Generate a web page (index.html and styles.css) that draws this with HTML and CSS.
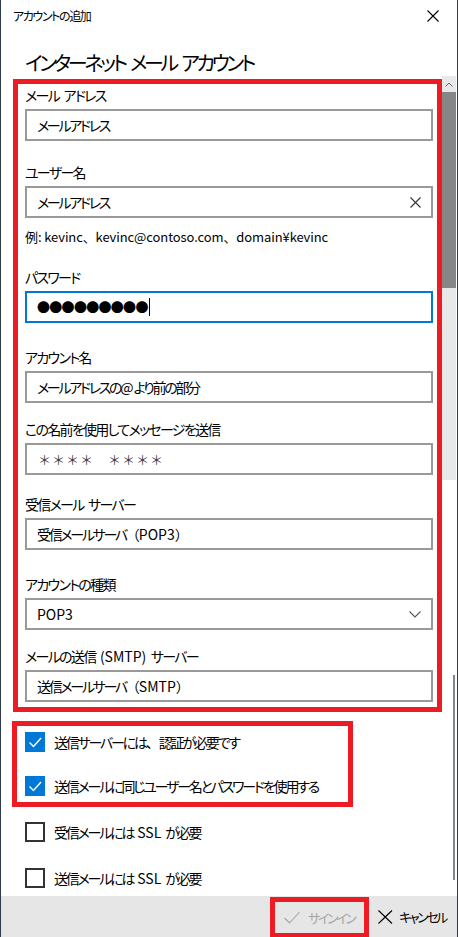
FILE: index.html
```html
<!DOCTYPE html>
<html lang="ja">
<head>
<meta charset="utf-8">
<title>アカウントの追加</title>
<link rel="stylesheet" href="styles.css">
</head>
<body>
<div class="window">
  <div class="titlebar">
    <span class="title">アカウントの追加</span>
    <span class="close">
      <svg width="12" height="12" viewBox="0 0 12 12"><path d="M0.5 0.5 L11.5 11.5 M11.5 0.5 L0.5 11.5" stroke="#000" stroke-width="1.1" fill="none"/></svg>
    </span>
  </div>
  <div class="content">
    <h1 class="heading">インターネット メール アカウント</h1>

    <div class="fields">
      <div class="field first">
        <div class="label">メール アドレス</div>
        <div class="input"><span>メールアドレス</span></div>
      </div>
      <div class="field">
        <div class="label">ユーザー名</div>
        <div class="input">
          <span>メールアドレス</span>
          <svg class="clear" width="11" height="11" viewBox="0 0 11 11"><path d="M0.5 0.5 L10.5 10.5 M10.5 0.5 L0.5 10.5" stroke="#333" stroke-width="1.1" fill="none"/></svg>
        </div>
        <div class="hint">例: kevinc、kevinc@contoso.com、domain¥kevinc</div>
      </div>
      <div class="field">
        <div class="label">パスワード</div>
        <div class="input focused"><span class="dots">●●●●●●●●●</span><span class="caret"></span></div>
      </div>
      <div class="field loose">
        <div class="label">アカウント名</div>
        <div class="input"><span>メールアドレスの<span class="lat">@</span>より前の部分</span></div>
      </div>
      <div class="field tight">
        <div class="label">この名前を使用してメッセージを送信</div>
        <div class="input"><span class="stars">＊＊＊＊　＊＊＊＊</span></div>
      </div>
      <div class="field mid">
        <div class="label">受信メール サーバー</div>
        <div class="input"><span>受信メールサーバ<span class="fw">（</span><span class="lat">POP3</span><span class="fw">）</span></span></div>
      </div>
      <div class="field loose">
        <div class="label">アカウントの種類</div>
        <div class="input select">
          <span class="lat">POP3</span>
          <svg class="chev" width="12" height="7" viewBox="0 0 12 7"><path d="M0.5 0.5 L6 6 L11.5 0.5" stroke="#555" stroke-width="1.1" fill="none"/></svg>
        </div>
      </div>
      <div class="field tight">
        <div class="label">メールの送信 <span class="lat">(SMTP)</span> サーバー</div>
        <div class="input"><span>送信メールサーバ<span class="fw">（</span><span class="lat">SMTP</span><span class="fw">）</span></span></div>
      </div>
    </div>

    <div class="checks-marked">
      <label class="check-row">
        <span class="box checked"><svg width="20" height="20" viewBox="0 0 20 20"><path d="M4.5 10.5 L8.5 14.5 L16 6" stroke="#fff" stroke-width="1.4" fill="none"/></svg></span>
        <span class="ctext">送信サーバーには<span class="fw">、</span>認証が必要です</span>
      </label>
      <label class="check-row">
        <span class="box checked"><svg width="20" height="20" viewBox="0 0 20 20"><path d="M4.5 10.5 L8.5 14.5 L16 6" stroke="#fff" stroke-width="1.4" fill="none"/></svg></span>
        <span class="ctext">送信メールに同じユーザー名とパスワードを使用する</span>
      </label>
    </div>

    <div class="checks">
      <label class="check-row">
        <span class="box"></span>
        <span class="ctext">受信メールには <span class="lat">SSL</span> が必要</span>
      </label>
      <label class="check-row">
        <span class="box"></span>
        <span class="ctext">送信メールには <span class="lat">SSL</span> が必要</span>
      </label>
    </div>

    <div class="scrollbar">
      <div class="sb-arrow"><svg width="8" height="5" viewBox="0 0 8 5"><path d="M0.5 4.5 L4 1 L7.5 4.5" stroke="#666" stroke-width="1" fill="none"/></svg></div>
      <div class="sb-thumb"></div>
      <div class="sb-track"></div>
    </div>
    <div class="scroll-indicator"></div>
  </div>
  <div class="footer">
    <div class="btn signin">
      <svg width="16" height="13" viewBox="0 0 16 13"><path d="M0.5 7 L5.5 12 L15.5 1" stroke="#a6a6a6" stroke-width="1.1" fill="none"/></svg>
      <span>サインイン</span>
    </div>
    <div class="btn cancel">
      <svg width="15" height="14" viewBox="0 0 15 14"><path d="M0.5 0.5 L14 13.5 M14 0.5 L0.5 13.5" stroke="#000" stroke-width="1.1" fill="none"/></svg>
      <span>キャンセル</span>
    </div>
  </div>
</div>
</body>
</html>
```
FILE: styles.css
```css
* { box-sizing: border-box; }
html, body { margin: 0; padding: 0; background: #fff; }
body {
  font-family: "Noto Sans CJK JP", sans-serif;
  font-feature-settings: "palt";
  color: #000;
}
.lat { letter-spacing: 0; }
.fw { font-feature-settings: normal; letter-spacing: -1px; }
.window {
  width: 458px;
  height: 937px;
  display: flex;
  flex-direction: column;
  border-left: 1px solid #2d3b4a;
  border-right: 1px solid #2d3b4a;
  background: #fff;
  overflow: hidden;
}
.titlebar {
  height: 32px;
  flex: none;
  display: flex;
  align-items: center;
  justify-content: space-between;
  padding: 0 18px 0 12px;
}
.title { font-size: 12px; line-height: 16px; letter-spacing: -1.4px; }
.close { display: flex; }
.content {
  flex: 1;
  position: relative;
  overflow: hidden;
}
.heading {
  margin: 17px 0 2px 24px;
  font-size: 20px;
  font-weight: normal;
  line-height: 28px;
  letter-spacing: -3.3px;
  word-spacing: 4px;
  white-space: nowrap;
}
.fields {
  margin-left: 12px;
  width: 429px;
  border: 5px solid #ed1c24;
  padding: 1px 4px 5px 7px;
}
.field { margin-top: 21px; }
.field.first { margin-top: 0; }
.field.loose { margin-top: 24px; }
.field.tight { margin-top: 16px; }
.field.mid { margin-top: 19px; }
.label {
  font-size: 14px;
  line-height: 20px;
  margin-bottom: 4px;
  letter-spacing: -1.7px;
  word-spacing: 3px;
  white-space: nowrap;
}
.input {
  height: 32px;
  border: 2px solid #999;
  padding: 0 10px;
  font-size: 14px;
  letter-spacing: -2.3px;
  white-space: nowrap;
  display: flex;
  align-items: center;
  justify-content: space-between;
}
.input.focused { border-color: #0078d7; justify-content: flex-start; }
.dots {
  font-size: 13px;
  letter-spacing: -0.7px;
  line-height: 20px;
}
.caret {
  display: block;
  width: 1px;
  height: 18px;
  background: #000;
  margin-left: 1px;
}
.stars {
  color: #444;
  font-feature-settings: normal;
  font-size: 13px;
  letter-spacing: 1px;
  margin-left: 1px;
}
.hint {
  font-size: 13px;
  line-height: 18px;
  margin-top: 10px;
  font-feature-settings: normal;
  letter-spacing: -0.1px;
  white-space: nowrap;
}
.checks-marked {
  margin: 9px 0 0 11px;
  width: 341px;
  border: 5px solid #ed1c24;
  padding: 6px 8px;
  display: flex;
  flex-direction: column;
  gap: 24px;
}
.checks {
  margin: 15px 0 0 24px;
  display: flex;
  flex-direction: column;
  gap: 26px;
}
.check-row {
  display: flex;
  align-items: center;
  gap: 9px;
  font-size: 14px;
  line-height: 20px;
  height: 20px;
}
.ctext { letter-spacing: -2.2px; word-spacing: 3px; white-space: nowrap; }
.box {
  width: 20px;
  height: 20px;
  border: 2px solid #333;
  flex: none;
}
.box.checked {
  background: #0078d7;
  border: none;
}
.box svg { display: block; }
.scrollbar {
  position: absolute;
  left: 441px;
  top: 44px;
  width: 14px;
  height: 404px;
  display: flex;
  flex-direction: column;
}
.sb-arrow {
  height: 16px;
  background: #e8e8e8;
  display: flex;
  align-items: center;
  justify-content: center;
}
.sb-thumb { height: 196px; background: #868686; }
.sb-track { flex: 1; background: #e8e8e8; }
.scroll-indicator {
  position: absolute;
  left: 452px;
  top: 643px;
  width: 2px;
  height: 205px;
  background: #868686;
}
.footer {
  height: 41px;
  flex: none;
  background: #e6e6e6;
  display: flex;
  justify-content: flex-end;
  align-items: stretch;
  padding-right: 11px;
}
.btn {
  display: flex;
  align-items: center;
  gap: 8px;
  font-size: 13px;
  letter-spacing: -2.4px;
  white-space: nowrap;
}
.signin {
  width: 99px;
  border: 5px solid #ed1c24;
  border-bottom-width: 4px;
  margin-top: 1px;
  padding-left: 9px;
  color: #a6a6a6;
}
.cancel { padding-left: 9px; gap: 6px; }
```
